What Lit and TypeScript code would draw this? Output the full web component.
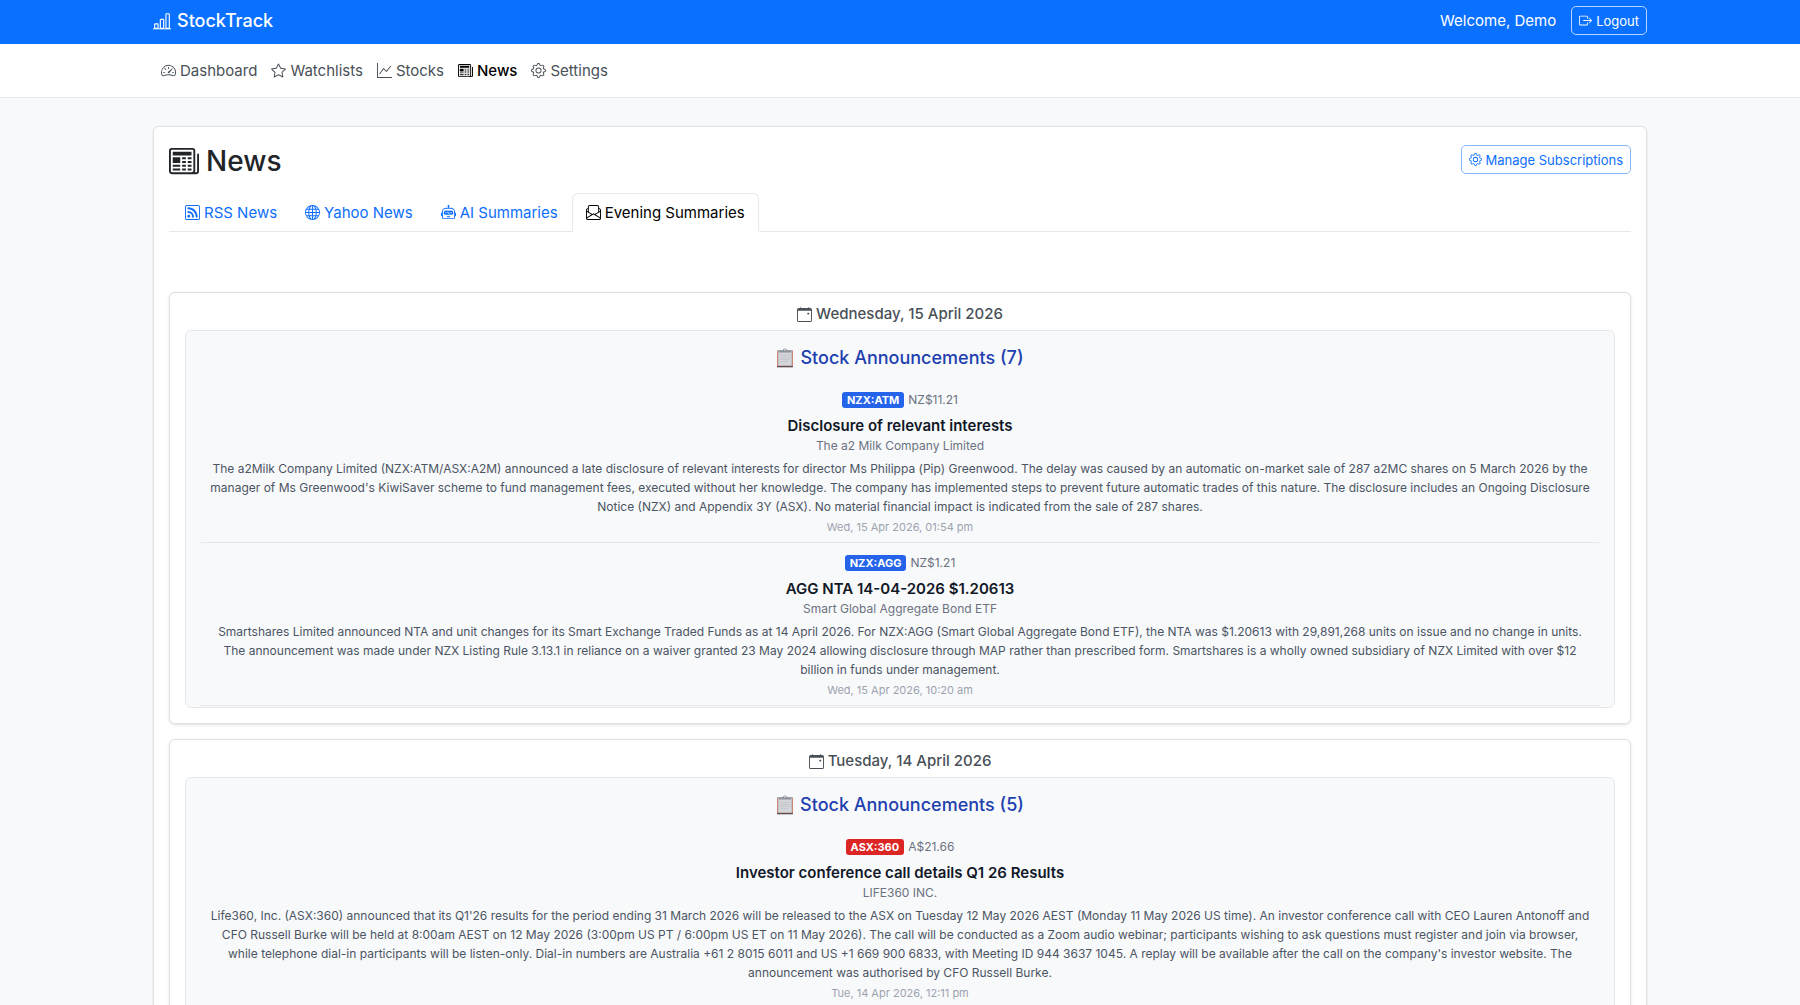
import { LitElement, html, css, svg } from "lit";
import { customElement } from "lit/decorators.js";

const icons: Record<string, string[]> = {
  bars: ["M4 11H2v3h2v-3zm5-4H7v7h2V7zm5-5v12h-2V2h2zm-2-1a1 1 0 0 0-1 1v12a1 1 0 0 0 1 1h2a1 1 0 0 0 1-1V2a1 1 0 0 0-1-1h-2zM6 7a1 1 0 0 1 1-1h2a1 1 0 0 1 1 1v7a1 1 0 0 1-1 1H7a1 1 0 0 1-1-1V7zm-5 4a1 1 0 0 1 1-1h2a1 1 0 0 1 1 1v3a1 1 0 0 1-1 1H2a1 1 0 0 1-1-1v-3z", "M0 14.5h16v.9H0z"],
  speed: ["M8 4a.5.5 0 0 1 .5.5V6a.5.5 0 0 1-1 0V4.500A.5.5 0 0 1 8 4zM3.732 5.732a.5.5 0 0 1 .707 0l.915.914a.5.5 0 1 1-.708.708l-.914-.915a.5.5 0 0 1 0-.707zM2 10a.5.5 0 0 1 .5-.5h1.586a.5.5 0 0 1 0 1H2.500A.5.5 0 0 1 2 10zm9.500 0a.5.5 0 0 1 .5-.5h1.500a.5.5 0 0 1 0 1H12a.5.5 0 0 1-.5-.5zm.754-4.246a.389.389 0 0 0-.527-.02L7.547 9.310a.91.91 0 1 0 1.302 1.258l3.434-4.297a.389.389 0 0 0-.029-.518z", "M0 10a8 8 0 1 1 15.547 2.661c-.442 1.253-1.845 1.602-2.932 1.250C11.309 13.488 9.475 13 8 13c-1.474 0-3.310.488-4.615.911-1.087.352-2.490.003-2.932-1.250A7.988 7.988 0 0 1 0 10zm8-7a7 7 0 0 0-6.603 9.329c.203.575.923.876 1.680.630C4.397 12.533 6.358 12 8 12s3.604.532 4.923.960c.757.245 1.477-.056 1.680-.631A7 7 0 0 0 8 3z"],
  star: ["M2.866 14.850c-.078.444.36.791.746.593l4.390-2.256 4.389 2.256c.386.198.824-.149.746-.592l-.830-4.730 3.522-3.356c.33-.314.160-.888-.282-.950l-4.898-.696L8.465.792a.513.513 0 0 0-.927 0L5.354 5.120l-4.898.696c-.441.062-.612.636-.283.950l3.523 3.356-.83 4.730zm4.905-2.767-3.686 1.894.694-3.957a.565.565 0 0 0-.163-.505L1.710 6.745l4.052-.576a.525.525 0 0 0 .393-.288L8 2.223l1.847 3.658a.525.525 0 0 0 .393.288l4.052.575-2.906 2.770a.565.565 0 0 0-.163.506l.694 3.957-3.686-1.894a.503.503 0 0 0-.461 0z"],
  graph: ["M0 0h1v15h15v1H0V0zm14.817 3.113a.5.5 0 0 1 .070.704l-4.500 5.500a.5.5 0 0 1-.740.037L7.060 6.767l-3.656 5.027a.5.5 0 0 1-.808-.588l4-5.500a.5.5 0 0 1 .758-.060l2.609 2.610 4.150-5.073a.5.5 0 0 1 .704-.070z"],
  news: ["M0 2.500A1.500 1.500 0 0 1 1.500 1h11A1.500 1.500 0 0 1 14 2.500v10.528c0 .3-.050.654-.238.972h.738a.5.5 0 0 0 .5-.5v-9a.5.5 0 0 1 1 0v9a1.500 1.500 0 0 1-1.500 1.500H1.497A1.497 1.497 0 0 1 0 13.500v-11zM12 14c.370 0 .654-.211.853-.441.092-.106.147-.279.147-.531V2.500a.5.5 0 0 0-.5-.5h-11a.5.5 0 0 0-.5.5v11c0 .278.223.5.497.5H12z", "M2 3h10v2H2V3zm0 3h4v3H2V6zm0 4h4v1H2v-1zm0 2h4v1H2v-1zm5-6h2v1H7V6zm3 0h2v1h-2V6zM7 8h2v1H7V8zm3 0h2v1h-2V8zm-3 2h2v1H7v-1zm3 0h2v1h-2v-1zm-3 2h2v1H7v-1zm3 0h2v1h-2v-1z"],
  gear: ["M8 4.754a3.246 3.246 0 1 0 0 6.492 3.246 3.246 0 0 0 0-6.492zM5.754 8a2.246 2.246 0 1 1 4.492 0 2.246 2.246 0 0 1-4.492 0z", "M9.796 1.343c-.527-1.790-3.065-1.790-3.592 0l-.094.319a.873.873 0 0 1-1.255.520l-.292-.160c-1.640-.892-3.433.902-2.540 2.541l.159.292a.873.873 0 0 1-.520 1.255l-.319.094c-1.790.527-1.790 3.065 0 3.592l.319.094a.873.873 0 0 1 .520 1.255l-.160.292c-.892 1.640.901 3.434 2.541 2.540l.292-.159a.873.873 0 0 1 1.255.520l.094.319c.527 1.790 3.065 1.790 3.592 0l.094-.319a.873.873 0 0 1 1.255-.520l.292.160c1.640.893 3.434-.902 2.540-2.541l-.159-.292a.873.873 0 0 1 .520-1.255l.319-.094c1.790-.527 1.790-3.065 0-3.592l-.319-.094a.873.873 0 0 1-.520-1.255l.160-.292c.893-1.640-.902-3.433-2.541-2.540l-.292.159a.873.873 0 0 1-1.255-.520l-.094-.319zm-2.633.283c.246-.835 1.428-.835 1.674 0l.094.319a1.873 1.873 0 0 0 2.693 1.115l.291-.160c.764-.415 1.600.420 1.184 1.185l-.159.292a1.873 1.873 0 0 0 1.116 2.692l.318.094c.835.246.835 1.428 0 1.674l-.319.094a1.873 1.873 0 0 0-1.115 2.693l.160.291c.415.764-.420 1.600-1.185 1.184l-.291-.159a1.873 1.873 0 0 0-2.693 1.116l-.094.318c-.246.835-1.428.835-1.674 0l-.094-.319a1.873 1.873 0 0 0-2.692-1.115l-.292.160c-.764.415-1.600-.420-1.184-1.185l.159-.291A1.873 1.873 0 0 0 1.945 8.930l-.319-.094c-.835-.246-.835-1.428 0-1.674l.319-.094A1.873 1.873 0 0 0 3.060 4.377l-.160-.292c-.415-.764.420-1.600 1.185-1.184l.292.159a1.873 1.873 0 0 0 2.692-1.115l.094-.319z"],
  exit: ["M10 12.500a.5.5 0 0 1-.5.5h-8a.5.5 0 0 1-.5-.5v-9a.5.5 0 0 1 .5-.5h8a.5.5 0 0 1 .5.5v2a.5.5 0 0 0 1 0v-2A1.500 1.500 0 0 0 9.500 2h-8A1.500 1.500 0 0 0 0 3.500v9A1.500 1.500 0 0 0 1.500 14h8a1.500 1.500 0 0 0 1.500-1.500v-2a.5.5 0 0 0-1 0v2z", "M15.854 8.354a.5.5 0 0 0 0-.708l-3-3a.5.5 0 0 0-.708.708L14.293 7.500H5.500a.5.5 0 0 0 0 1h8.793l-2.147 2.146a.5.5 0 0 0 .708.708l3-3z"],
  rss: ["M14 1a1 1 0 0 1 1 1v12a1 1 0 0 1-1 1H2a1 1 0 0 1-1-1V2a1 1 0 0 1 1-1h12zM2 0a2 2 0 0 0-2 2v12a2 2 0 0 0 2 2h12a2 2 0 0 0 2-2V2a2 2 0 0 0-2-2H2z", "M5.500 12a1.500 1.500 0 1 1-3 0 1.500 1.500 0 0 1 3 0zm-3-8.500a1 1 0 0 1 1-1c5.523 0 10 4.477 10 10a1 1 0 1 1-2 0 8 8 0 0 0-8-8 1 1 0 0 1-1-1zm0 4a1 1 0 0 1 1-1 6 6 0 0 1 6 6 1 1 0 1 1-2 0 4 4 0 0 0-4-4 1 1 0 0 1-1-1z"],
  globe: ["M0 8a8 8 0 1 1 16 0A8 8 0 0 1 0 8zm7.500-6.923c-.670.204-1.335.820-1.887 1.855A7.970 7.970 0 0 0 5.145 4H7.500V1.077zM4.090 4a9.267 9.267 0 0 1 .640-1.539 6.700 6.700 0 0 1 .597-.933A7.025 7.025 0 0 0 2.255 4H4.090zm-.582 3.500c.030-.877.138-1.718.312-2.500H1.674a6.958 6.958 0 0 0-.656 2.500h2.490zM4.847 5a12.500 12.500 0 0 0-.338 2.500H7.500V5H4.847zM8.500 5v2.500h2.990a12.495 12.495 0 0 0-.337-2.500H8.500zM4.510 8.500a12.500 12.500 0 0 0 .337 2.500H7.500V8.500H4.510zm3.990 0V11h2.653c.187-.765.306-1.608.338-2.500H8.500zM5.145 12c.138.386.295.744.468 1.068.552 1.035 1.218 1.650 1.887 1.855V12H5.145zm.182 2.472a6.696 6.696 0 0 1-.597-.933A9.268 9.268 0 0 1 4.090 12H2.255a7.024 7.024 0 0 0 3.072 2.472zM3.820 11a13.652 13.652 0 0 1-.312-2.500h-2.490c.062.890.291 1.733.656 2.500H3.820zm6.853 3.472A7.024 7.024 0 0 0 13.745 12H11.910a9.270 9.270 0 0 1-.640 1.539 6.688 6.688 0 0 1-.597.933zM8.500 12v2.923c.670-.204 1.335-.820 1.887-1.855.173-.324.330-.682.468-1.068H8.500zm3.680-1h2.146c.365-.767.594-1.610.656-2.500h-2.490a13.650 13.650 0 0 1-.312 2.500zm2.802-3.500a6.959 6.959 0 0 0-.656-2.500H12.180c.174.782.282 1.623.312 2.500h2.490zM11.270 2.461c.247.464.462.980.640 1.539h1.835a7.024 7.024 0 0 0-3.072-2.472c.218.284.418.598.597.933zM10.855 4a7.966 7.966 0 0 0-.468-1.068C9.835 1.897 9.170 1.282 8.500 1.077V4h2.355z"],
  robot: ["M6 12.500a.5.5 0 0 1 .5-.5h3a.5.5 0 0 1 0 1h-3a.5.5 0 0 1-.5-.5zM3 8.062C3 6.760 4.235 5.765 5.530 5.886a26.580 26.580 0 0 0 4.940 0C11.765 5.765 13 6.760 13 8.062v1.157a.933.933 0 0 1-.765.935c-.845.147-2.340.346-4.235.346-1.895 0-3.390-.200-4.235-.346A.933.933 0 0 1 3 9.219V8.062zm4.542-.827a.25.25 0 0 0-.217.068l-.920.900a24.767 24.767 0 0 1-1.871-.183.25.25 0 0 0-.068.495c.550.076 1.232.149 2.020.193a.25.25 0 0 0 .189-.071l.754-.736.847 1.710a.25.25 0 0 0 .404.062l.932-.970a25.286 25.286 0 0 0 1.922-.188.25.25 0 0 0-.068-.495c-.538.074-1.207.145-1.980.189a.25.25 0 0 0-.166.076l-.754.785-.842-1.700a.25.25 0 0 0-.182-.135z", "M8.500 1.866a1 1 0 1 0-1 0V3h-2A4.500 4.500 0 0 0 1 7.500V8a1 1 0 0 0-1 1v2a1 1 0 0 0 1 1v1a2 2 0 0 0 2 2h10a2 2 0 0 0 2-2v-1a1 1 0 0 0 1-1V9a1 1 0 0 0-1-1v-.5A4.500 4.500 0 0 0 10.500 3h-2V1.866zM14 7.500V13a1 1 0 0 1-1 1H3a1 1 0 0 1-1-1V7.500A3.500 3.500 0 0 1 5.500 4h5A3.500 3.500 0 0 1 14 7.500z"],
  mail: ["M4 0a2 2 0 0 0-2 2v1.133l-.941.502A2 2 0 0 0 0 5.400V14a2 2 0 0 0 2 2h12a2 2 0 0 0 2-2V5.400a2 2 0 0 0-1.059-1.765L14 3.133V2a2 2 0 0 0-2-2H4zm10 4.267.470.250A1 1 0 0 1 15 5.400v.817l-1 .600V4.267zm-1 3.150-3.750 2.250L8 8.917l-1.250.750L3 7.417V2a1 1 0 0 1 1-1h8a1 1 0 0 1 1 1v5.417zm-11-.600-1-.600V5.400a1 1 0 0 1 .530-.882L2 4.267v2.550zm13 .566v5.734l-4.778-2.867L15 7.383zm-.035 6.880A1 1 0 0 1 14 15H2a1 1 0 0 1-.965-.738L8 10.083l6.965 4.180zM1 13.116V7.383l4.778 2.867L1 13.117z"],
  calendar: ["M11 6.500a.5.5 0 0 1 .5-.5h1a.5.5 0 0 1 .5.5v1a.5.5 0 0 1-.5.5h-1a.5.5 0 0 1-.5-.5v-1z", "M3.500 0a.5.5 0 0 1 .5.5V1h8V.5a.5.5 0 0 1 1 0V1h1a2 2 0 0 1 2 2v11a2 2 0 0 1-2 2H2a2 2 0 0 1-2-2V3a2 2 0 0 1 2-2h1V.5a.5.5 0 0 1 .5-.5zM1 4v10a1 1 0 0 0 1 1h12a1 1 0 0 0 1-1V4H1z"],
};

const icon = (name: string) => html`<svg class="icon" viewBox="0 0 16 16" aria-hidden="true">
  ${icons[name].map((d) => svg`<path fill-rule="evenodd" d=${d}></path>`)}
</svg>`;

const clipboard = html`<svg class="clip" viewBox="0 0 18 20" aria-hidden="true">
  <rect x="1" y="2" width="16" height="17.500" rx="1" fill="#a9aaae"></rect>
  <path d="M1.500 3v15h15V3" fill="none" stroke="#d97c66" stroke-width=".8"></path>
  <rect x="2.500" y="3.500" width="13" height="14" fill="#d3d5d8"></rect>
  <path d="M4 7.500h10M4 9.500h10M4 11.500h10M4 13.500h8" stroke="#c0c3c8" stroke-width=".8"></path>
  <path d="M1 18.600h16" stroke="#54474a" stroke-width="1"></path>
  <path d="M3 2.400h3.500Q7.300.500 9 .500t2.500 1.900H15v2H3z" fill="#8d939b"></path>
  <circle cx="9" cy="1.900" r=".8" fill="#e4e6e9"></circle>
</svg>`;

interface Item { code: string; price: string; title: string; company: string; text: string; time: string; }
interface Day { date: string; count: number; items: Item[]; }

const days: Day[] = [
  {
    date: "Wednesday, 15 April 2026", count: 7, items: [
      { code: "NZX:ATM", price: "NZ$11.21", title: "Disclosure of relevant interests", company: "The a2 Milk Company Limited", time: "Wed, 15 Apr 2026, 01:54 pm",
        text: "The a2Milk Company Limited (NZX:ATM/ASX:A2M) announced a late disclosure of relevant interests for director Ms Philippa (Pip) Greenwood. The delay was caused by an automatic on-market sale of 287 a2MC shares on 5 March 2026 by the manager of Ms Greenwood's KiwiSaver scheme to fund management fees, executed without her knowledge. The company has implemented steps to prevent future automatic trades of this nature. The disclosure includes an Ongoing Disclosure Notice (NZX) and Appendix 3Y (ASX). No material financial impact is indicated from the sale of 287 shares." },
      { code: "NZX:AGG", price: "NZ$1.21", title: "AGG NTA 14-04-2026 $1.20613", company: "Smart Global Aggregate Bond ETF", time: "Wed, 15 Apr 2026, 10:20 am",
        text: "Smartshares Limited announced NTA and unit changes for its Smart Exchange Traded Funds as at 14 April 2026. For NZX:AGG (Smart Global Aggregate Bond ETF), the NTA was $1.20613 with 29,891,268 units on issue and no change in units. The announcement was made under NZX Listing Rule 3.13.1 in reliance on a waiver granted 23 May 2024 allowing disclosure through MAP rather than prescribed form. Smartshares is a wholly owned subsidiary of NZX Limited with over $12 billion in funds under management." },
    ],
  },
  {
    date: "Tuesday, 14 April 2026", count: 5, items: [
      { code: "ASX:360", price: "A$21.66", title: "Investor conference call details Q1 26 Results", company: "LIFE360 INC.", time: "Tue, 14 Apr 2026, 12:11 pm",
        text: "Life360, Inc. (ASX:360) announced that its Q1'26 results for the period ending 31 March 2026 will be released to the ASX on Tuesday 12 May 2026 AEST (Monday 11 May 2026 US time). An investor conference call with CEO Lauren Antonoff and CFO Russell Burke will be held at 8:00am AEST on 12 May 2026 (3:00pm US PT / 6:00pm US ET on 11 May 2026). The call will be conducted as a Zoom audio webinar; participants wishing to ask questions must register and join via browser, while telephone dial-in participants will be listen-only. Dial-in numbers are Australia +61 2 8015 6011 and US +1 669 900 6833, with Meeting ID 944 3637 1045. A replay will be available after the call on the company's investor website. The announcement was authorised by CFO Russell Burke." },
    ],
  },
];

@customElement("app-root")
export class AppRoot extends LitElement {
  static styles = css`
    :host { display: block; height: 100vh; overflow: hidden; background: #f8f9fa; color: #212529; font: 15px/24px Inter, "Liberation Sans", sans-serif; }
    * { box-sizing: border-box; }
    a { color: inherit; text-decoration: none; }
    h1, h2, h3, h4, p { margin: 0; }
    button { font: inherit; background: none; cursor: pointer; }
    .icon { width: 1em; height: 1em; fill: currentColor; flex: none; }
    .container { width: 83%; margin: 0 auto; display: flex; align-items: center; }
    .top { background: #0a70ff; color: #fff; }
    .top .container { height: 44px; padding-bottom: 3px; justify-content: space-between; }
    .brand { display: flex; align-items: center; gap: 6px; font-size: 18px; font-weight: 500; }
    .user { display: flex; align-items: center; gap: 15px; }
    .btn { display: flex; align-items: center; gap: 4px; height: 29px; padding: 0 7px; border: 1px solid; border-radius: 5px; font-size: 13px; }
    .logout { color: #fff; border-color: #b5d4ff; }
    .manage { color: #0d6efd; border-color: #86b6fe; }
    .nav { background: #fff; border-bottom: 1px solid #e6e9ec; }
    .nav .container { height: 53px; padding: 0 8px; gap: 14px; color: #495057; }
    .nav a, .tabs a { display: flex; align-items: center; gap: 4px; }
    .nav .on { color: #000; font-weight: 500; }
    .page { width: 83%; margin: 28px auto 0; padding: 14px 15px; background: #fff; border: 1px solid #dee2e6; border-radius: 6px; box-shadow: 0 1px 3px rgba(0, 0, 0, .08); }
    .head { display: flex; align-items: start; justify-content: space-between; height: 40px; padding-top: 4px; }
    h1 { display: flex; align-items: center; gap: 7px; font-size: 28px; line-height: 32px; font-weight: 500; }
    h1 .icon { width: 30px; height: 30px; }
    .tabs { display: flex; margin-top: 12px; margin-bottom: 60px; padding-left: 2px; border-bottom: 1px solid #e6e9ec; color: #0d6efd; }
    .tabs a { height: 39px; padding: 0 13px; margin-bottom: -1px; border: 1px solid transparent; border-radius: 6px 6px 0 0; }
    .tabs .on { color: #000; background: #fff; border-color: #e6e9ec #e6e9ec #fff; }
    .day { margin-bottom: 15px; padding: 9px 15px 15px; text-align: center; border: 1px solid #dfe1e3; border-radius: 6px; box-shadow: 0 1px 3px rgba(0, 0, 0, .12); }
    h2 { display: flex; align-items: center; justify-content: center; gap: 4px; margin-bottom: 4px; font-size: 15px; line-height: 24px; font-weight: 500; color: #495057; }
    .panel { padding: 12px 15px 1px; background: #f8f9fb; border: 1px solid #e5e8eb; border-radius: 6px; }
    h3 { display: flex; align-items: center; justify-content: center; gap: 6px; margin-bottom: 19px; font-size: 18px; line-height: 30px; font-weight: 500; color: #1e40af; }
    .clip { width: 18px; height: 20px; }
    .item { border-bottom: 1px solid #e5e7eb; padding-bottom: 6px; margin-bottom: 12px; }
    .item:last-child { margin-bottom: 0; }
    .quote { display: flex; align-items: center; justify-content: center; gap: 4px; height: 16px; font-size: 12px; color: #6b7280; }
    .badge { height: 16px; padding: 0 5px; border-radius: 3px; color: #fff; background: #2563eb; font-size: 11px; line-height: 16px; font-weight: 700; }
    .asx { background: #dc2626; }
    h4 { margin-top: 7px; font-size: 15px; line-height: 22px; font-weight: 600; color: #111827; }
    .company { font-size: 12px; line-height: 18px; color: #6b7280; }
    .text { margin: 4px 0 2px; padding: 0 6px; font-size: 12px; line-height: 19px; color: #4b5563; }
    time { display: block; font-size: 11px; line-height: 18px; color: #9ca3af; }
  `;

  private item(i: Item) {
    return html`<article class="item">
      <div class="quote"><span class="badge ${i.code.startsWith("ASX") ? "asx" : ""}">${i.code}</span><span>${i.price}</span></div>
      <h4>${i.title}</h4>
      <p class="company">${i.company}</p>
      <p class="text">${i.text}</p>
      <time>${i.time}</time>
    </article>`;
  }

  render() {
    const nav = [["speed", "Dashboard"], ["star", "Watchlists"], ["graph", "Stocks"], ["news", "News"], ["gear", "Settings"]];
    const tabs = [["rss", "RSS News"], ["globe", "Yahoo News"], ["robot", "AI Summaries"], ["mail", "Evening Summaries"]];
    return html`
      <header class="top"><div class="container">
        <a class="brand" href="#">${icon("bars")}StockTrack</a>
        <div class="user"><span>Welcome, Demo</span><button class="btn logout">${icon("exit")}Logout</button></div>
      </div></header>
      <nav class="nav"><div class="container">
        ${nav.map(([i, t]) => html`<a href="#" class=${t === "News" ? "on" : ""}>${icon(i)}${t}</a>`)}
      </div></nav>
      <main class="page">
        <div class="head"><h1>${icon("news")}News</h1><button class="btn manage">${icon("gear")}Manage Subscriptions</button></div>
        <nav class="tabs">${tabs.map(([i, t]) => html`<a href="#" class=${i === "mail" ? "on" : ""}>${icon(i)}${t}</a>`)}</nav>
        ${days.map((d) => html`<section class="day">
          <h2>${icon("calendar")}${d.date}</h2>
          <div class="panel"><h3>${clipboard}Stock Announcements (${d.count})</h3>${d.items.map((i) => this.item(i))}</div>
        </section>`)}
      </main>`;
  }
}
